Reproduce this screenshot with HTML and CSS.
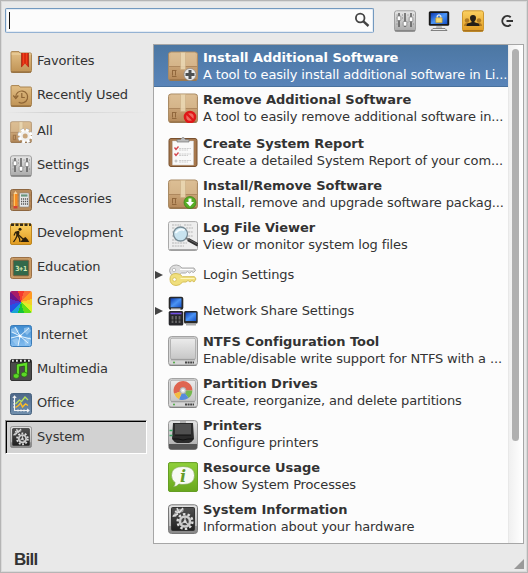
FILE: index.html
```html
<!DOCTYPE html>
<html lang="en">
<head>
<meta charset="utf-8">
<title>Menu</title>
<link rel="stylesheet" href="styles.css">
</head>
<body>
<svg class="defs" aria-hidden="true">
  <defs>
    <linearGradient id="tan" x2="0" y2="1"><stop stop-color="#e2bf86"/><stop offset="1" stop-color="#bf9254"/></linearGradient>
    <linearGradient id="card" x2="0" y2="1"><stop stop-color="#dcbd94"/><stop offset=".5" stop-color="#c9a376"/><stop offset="1" stop-color="#b48859"/></linearGradient>
    <linearGradient id="silver" x2="0" y2="1"><stop stop-color="#e6e6e6"/><stop offset="1" stop-color="#a8a8a8"/></linearGradient>
    <linearGradient id="pale" x2="0" y2="1"><stop stop-color="#ececec"/><stop offset="1" stop-color="#c6c6c6"/></linearGradient>
    <linearGradient id="dark" x2="0" y2="1"><stop stop-color="#505050"/><stop offset="1" stop-color="#202020"/></linearGradient>
    <linearGradient id="gold" x2="0" y2="1"><stop stop-color="#fbd060"/><stop offset="1" stop-color="#e09a20"/></linearGradient>
    <linearGradient id="blue" x2="1" y2="1"><stop stop-color="#0b39b0"/><stop offset=".5" stop-color="#4b94f4"/><stop offset="1" stop-color="#1450c8"/></linearGradient>
    <linearGradient id="sky" x2="0" y2="1"><stop stop-color="#3e8bd0"/><stop offset="1" stop-color="#84bdf0"/></linearGradient>
    <linearGradient id="green" x2="0" y2="1"><stop stop-color="#8fd03a"/><stop offset="1" stop-color="#68a61d"/></linearGradient>
    <linearGradient id="slate" x2="0" y2="1"><stop stop-color="#4d6788"/><stop offset="1" stop-color="#7190ae"/></linearGradient>
  </defs>
  <symbol id="sliders" viewBox="0 0 22 22">
    <rect x=".5" y=".8" width="21" height="20.7" rx="2.2" fill="url(#silver)" stroke="#a0a0a0"/>
    <path d="M1 20.8h20" stroke="#777" />
    <path d="M5 3v14M11 3v14M17 3v14" stroke="#555" stroke-width="1.4"/>
    <path d="M2.5 5h1M2.5 8h1M2.5 11h1M2.5 14h1M8 5h1M8 8h1M13.5 5h1M13.5 12h1M19 5h1M19 14h1" stroke="#888"/>
    <g fill="#fff" stroke="#777" stroke-width=".7"><rect x="3.2" y="6" width="3.6" height="4.5" rx=".7"/><rect x="9.2" y="11.5" width="3.6" height="4.5" rx=".7"/><rect x="15.2" y="7" width="3.6" height="4.5" rx=".7"/></g>
  </symbol>
  <symbol id="box" viewBox="0 0 30 30">
    <rect x=".5" y="1" width="29" height="28.5" rx="2.5" fill="url(#card)" stroke="#a98b65"/>
    <path d="M3 1.7h24L29 15.500H1z" fill="#dcbf96" opacity=".6"/>
    <path d="M1 15.5h28" stroke="#a67f55" stroke-width=".8"/>
    <path d="M1.500 29h27" stroke="#8a673f"/>
    <path d="M12.5 1.500h5v17h-5z" fill="#ead8b4" opacity=".85"/>
    <path d="M12.5 1.500v17h5v-17" fill="none" stroke="#c4a880" stroke-width=".5"/>
    <path d="M4.500 20v4.500M7.500 20v4.500M4 25.5h4.500M4 19.500h4.500" fill="none" stroke="#8c6238" stroke-width=".9"/>
  </symbol>
  <symbol id="gears" viewBox="0 0 30 30">
    <rect x=".5" y=".8" width="29" height="28.7" rx="3" fill="url(#silver)" stroke="#777"/>
    <path d="M1 22h28v5q0 2-2 2H3q-2 0-2-2z" fill="#777" opacity=".6"/>
    <rect x="3.5" y="3.5" width="23" height="23" rx="1" fill="url(#dark)" stroke="#333"/>
    <path d="M4 13l5-8h7l-1 3-5 1-2 4z" fill="#999"/>
    <circle cx="17" cy="17.500" r="7.4" fill="none" stroke="#ddd" stroke-width="2.4" stroke-dasharray="2.5 2.150"/>
    <circle cx="17" cy="17.500" r="5" fill="#444" stroke="#ccc" stroke-width="2.600"/>
    <path d="M7 7l3 2M9 4l2 5M15 4l-4 5M5 12l5-2" stroke="#ddd" stroke-width="1.5"/>
    <path d="M17 17.500l5 5M17 17.500l-5 3M17 17.500V12" stroke="#ccc" stroke-width="1.3"/>
    <circle cx="17" cy="17.500" r="1.5" fill="#ddd"/>
  </symbol>
  <symbol id="drive" viewBox="0 0 30 30">
    <rect x=".5" y=".6" width="29" height="28.9" rx="3" fill="#d6d6d6" stroke="#9d9d9d"/>
    <rect x="2.5" y="2.300" width="25" height="21" rx="1.5" fill="url(#pale)" stroke="#a8a8a8" stroke-width=".8"/>
    <path d="M3 23.8h24" stroke="#8a8a8a" stroke-width=".8"/><path d="M1.500 29.200h27" stroke="#777"/>
    <path d="M17 26.5h9" stroke="#444" stroke-width="2.2" stroke-dasharray="2 .6"/>
    <circle cx="6" cy="26.5" r="1" fill="#4ca843"/>
  </symbol>
</svg>

<div class="window">
  <header class="toolbar">
    <div class="search">
      <span class="caret"></span>
      <svg class="lens" viewBox="0 0 16 16"><circle cx="6.200" cy="6" r="4.300" fill="none" stroke="#444" stroke-width="1.800"/><path d="M9.200 9.200l5.300 4.800" stroke="#444" stroke-width="2.400"/></svg>
    </div>
    <div class="actions">
      <svg class="i22"><use href="#sliders"/></svg>
      <svg class="i22" viewBox="0 0 22 22">
        <rect x=".8" y="1.3" width="20.4" height="14.500" rx="1.5" fill="#181818"/><rect x="2.7" y="3" width="16.6" height="11" fill="url(#blue)"/>
        <path d="M8.500 16h5l.8 2.300H7.700z" fill="#bbb"/><path d="M3 20.500l2-2h12l2 2z" fill="#eee" stroke="#666" stroke-width=".8"/>
        <path d="M9.200 8V6.200q1.800-2.600 3.600 0V8" fill="none" stroke="#eee" stroke-width="1.200"/><rect x="7.800" y="7.800" width="6.400" height="4.900" rx=".5" fill="#f4d76c" stroke="#b68d24" stroke-width=".6"/>
      </svg>
      <svg class="i22" viewBox="0 0 22 22">
        <rect x=".5" y=".8" width="21" height="20.7" rx="2" fill="url(#gold)" stroke="#cd982f"/><path d="M1 20.8h20" stroke="#94631a"/>
        <g fill="#b07a22"><circle cx="5" cy="10.500" r="2.200"/><path d="M2 16q0-3 3-3h12q3 0 3 3z"/><circle cx="17" cy="10.500" r="2.200"/></g>
        <path d="M8 8q0-3 3-3t3 3q0 2.300-1.500 3.300v1l4 1.200q1 .7 1 2.500h-13q0-1.800 1-2.500l4-1.200v-1Q8 10.300 8 8z" fill="#252018"/>
      </svg>
      <svg class="quit" viewBox="0 0 16 16"><path d="M11.700 4.300A5 5 0 1 0 11.700 11.700" fill="none" stroke="#333" stroke-width="2"/><path d="M7.500 8H14" stroke="#333" stroke-width="2"/></svg>
    </div>
  </header>

  <main class="content">
    <nav class="categories">
      <div class="cat"><svg class="i22" viewBox="0 0 22 22"><path d="M1 3V1.500q0-.9 1-.9h7l1 1.400h10.500q1 0 1 1.500v16q0 2-2 2h-17q-1.500 0-1.500-2z" fill="url(#tan)" stroke="#a98450"/><path d="M1.500 3h19" stroke="#eed5a5"/><path d="M1 21h20" stroke="#896539"/><path d="M11.500 2h7v14.500L15 12.500l-3.500 4z" fill="#d92b10"/><path d="M13.500 2v11M16.500 2v11" stroke="#f5481f" stroke-width=".8"/><path d="M11.500 2v14M18.500 2v14" stroke="#972311" stroke-width=".7"/></svg><span>Favorites</span></div>
      <div class="cat"><svg class="i22" viewBox="0 0 22 22"><path d="M1 3V1.500q0-.9 1-.9h7l1 1.400h10.500q1 0 1 1.500v16q0 2-2 2h-17q-1.500 0-1.500-2z" fill="url(#tan)" stroke="#a98450"/><path d="M1 21h20" stroke="#896539"/><path d="M5.700 12a6 6 0 1 1 3 5.200M3.300 10.500l2.500 3 2.500-3M11.800 8v4.500h3" fill="none" stroke="#8e6535" stroke-width="1.200"/></svg><span>Recently Used</span></div>
      <hr>
      <div class="cat"><svg class="i22" viewBox="0 0 22 22"><use href="#box" width="22" height="22"/><circle cx="15.200" cy="15" r="6.200" fill="none" stroke="#aaa" stroke-width="3.400" stroke-dasharray="3 1.870"/><circle cx="15.200" cy="15" r="4.100" fill="#c9a67c" stroke="#f1f1f1" stroke-width="3.200"/><circle cx="15.200" cy="15" r="6" fill="none" stroke="#fff" stroke-width="2.600" stroke-dasharray="2.800 1.912"/></svg><span>All</span></div>
      <div class="cat"><svg class="i22"><use href="#sliders"/></svg><span>Settings</span></div>
      <div class="cat"><svg class="i22" viewBox="0 0 22 22"><rect x=".5" y=".5" width="21" height="21" rx="2" fill="#b68a5b" stroke="#8d6640"/><path d="M1 6h20M1 12h20M1 17h20" stroke="#9d7042" opacity=".6"/><path d="M3.500 5l2-3 2 3v14h-4z" fill="#f78b22"/><path d="M3.500 5l2-3 2 3" fill="#f2d4a6"/><path d="M4.500 5v12" stroke="#ffc462"/><path d="M3.500 17h4v2.500h-4z" fill="#d04438"/><rect x="9.500" y="4" width="9.500" height="14" rx="1" fill="#e8e8e8" stroke="#888" stroke-width=".6"/><path d="M11 6.500h6.500" stroke="#69957e" stroke-width="2.200"/><path d="M11 10h7M11 12.500h7M11 15h7" stroke="#555" stroke-width="1.300" stroke-dasharray="1.200 .8"/></svg><span>Accessories</span></div>
      <div class="cat"><svg class="i22" viewBox="0 0 22 22"><rect x=".5" y=".8" width="21" height="20.700" rx="1.500" fill="url(#gold)" stroke="#bd8620"/><path d="M1 1.800h20" stroke="#382d19" stroke-width="2.400" stroke-dasharray="3 1.500"/><circle cx="10" cy="6.300" r="1.500" fill="#2d210c"/><path d="M9 8.300L5.500 9.300 4 12.500" fill="none" stroke="#2d210c" stroke-width="1.200"/><path d="M8.300 8.500L7.300 13" stroke="#2d210c" stroke-width="2.600"/><path d="M7 13l-1.500 3L3.500 19M8 13l1.500 2.500.5 3.500M6 9.500l7 6.500" fill="none" stroke="#2d210c" stroke-width="1.300"/><path d="M10.500 19l2.500-3.500 2.500-1.500 2 2.300 1.800 2.700z" fill="#2d210c"/></svg><span>Development</span></div>
      <div class="cat"><svg class="i22" viewBox="0 0 22 22"><rect x=".5" y=".5" width="21" height="21" rx="2" fill="#c99b66" stroke="#9b7046"/><rect x="3.300" y="3.300" width="15.400" height="15.400" rx="1" fill="#32694a" stroke="#785f3c"/><text class="chalk" x="11" y="13.500" text-anchor="middle">3+1</text></svg><span>Education</span></div>
      <div class="cat"><span class="i22 wheel"></span><span>Graphics</span></div>
      <div class="cat"><svg class="i22" viewBox="0 0 22 22"><rect x=".5" y=".5" width="21" height="21" rx="2" fill="url(#sky)" stroke="#397bb8"/><path d="M1 4l5-2 3 4-3 3-5-1zM14 3l5-1 2 4-4 4-3-3zM2 15l5-2 3 4-4 3zM14 14l6-2-1 7-4 1z" fill="#a5d0f3" opacity=".65"/><path d="M2 7l8 4 9-8M10 11L8 21M10 11l8 7M1 13l8-2 12 3M5 2l5 9" fill="none" stroke="#e4f4ff" stroke-width="1"/><circle cx="10" cy="11" r="1.600" fill="#fff"/></svg><span>Internet</span></div>
      <div class="cat"><svg class="i22" viewBox="0 0 22 22"><rect x=".5" y=".8" width="21" height="20.700" rx="1.500" fill="#4b4b4b" stroke="#333"/><path d="M1 2h20" stroke="#1d1d1d" stroke-width="3"/><path d="M2 1.800h19" stroke="#eee" stroke-width="2" stroke-dasharray="1.800 2.200"/><path d="M8 16.500V6.500l8-1.500v10" fill="none" stroke="#1d4f0d" stroke-width="3.400"/><path d="M8 16.500V6.500l8-1.500v10" fill="none" stroke="#5fdc28" stroke-width="2.400"/><g fill="#5bd827" stroke="#1d4f0d" stroke-width=".5"><ellipse cx="6.200" cy="17" rx="3" ry="2.400"/><ellipse cx="14.200" cy="15.500" rx="3" ry="2.400"/></g></svg><span>Multimedia</span></div>
      <div class="cat"><svg class="i22" viewBox="0 0 22 22"><rect x=".5" y=".5" width="21" height="21" rx="2" fill="url(#slate)" stroke="#48637f"/><path d="M4.500 3v14.500H19M2.800 5l1.700-2 1.700 2M17 15.800l2 1.700-2 1.700M3 8h2M3 11h2M3 14h2M8 16.500v2M11 16.500v2M14 16.500v2" fill="none" stroke="#f3f3f3" stroke-width="1.100"/><path d="M5.500 11l4-4 2 1.500L15 4l3 3" fill="none" stroke="#b9e25c" stroke-width="1.300"/><path d="M5.500 14.500l3-2 2-2.500 2 4 3-3 2.500 1.500" fill="none" stroke="#ffbd22" stroke-width="1.400"/></svg><span>Office</span></div>
      <div class="cat active"><svg class="i22"><use href="#gears"/></svg><span>System</span></div>
    </nav>

    <section class="panel">
      <div class="apps">
        <div class="app selected"><svg class="i30" viewBox="0 0 30 30"><use href="#box"/><circle cx="22" cy="23.500" r="6" fill="#ededed" stroke="#888" stroke-width=".7"/><path d="M22 19v9M17.500 23.500h9" stroke="#4d5051" stroke-width="3"/></svg><div class="label"><b>Install Additional Software</b><span>A tool to easily install additional software in Li...</span></div></div>
        <div class="app gap"><svg class="i30" viewBox="0 0 30 30"><use href="#box"/><circle cx="22" cy="24" r="5" fill="#ef6b5f" stroke="#df1818" stroke-width="2.600"/><path d="M18.500 20.500l7 7" stroke="#df1818" stroke-width="2.300"/></svg><div class="label"><b>Remove Additional Software</b><span>A tool to easily remove additional software in...</span></div></div>
        <div class="app"><svg class="i30" viewBox="0 0 30 30"><rect x="1" y="1.500" width="28" height="28" rx="2" fill="#a7784d" stroke="#79512f"/><path d="M4.500 4h21v24h-21z" fill="#f9f9f9" stroke="#ccc" stroke-width=".5"/><path d="M9 5V2.500h3.500Q15-1.500 17.500 2.500H21V5z" fill="#bbb" stroke="#777" stroke-width=".7"/><path d="M11 11.500h12M11 13h9M11 17h12M11 18.500h9M11 23.500h12M11 25h9" stroke="#c4c4c4" stroke-width=".8" stroke-dasharray="2 .6"/><path d="M6.500 10.500l1.500 2 2.500-3M6.500 16.500l1.500 2 2.500-3" fill="none" stroke="#d4424b" stroke-width="1.300"/><circle cx="8" cy="24" r="1" fill="none" stroke="#999" stroke-width=".6"/></svg><div class="label"><b>Create System Report</b><span>Create a detailed System Report of your com...</span></div></div>
        <div class="app"><svg class="i30" viewBox="0 0 30 30"><use href="#box"/><circle cx="22" cy="23.500" r="6" fill="#57ad24" stroke="#397e15" stroke-width=".7"/><path d="M20.500 19.500h3V23h2.500l-4 4.500-4-4.500h2.500z" fill="#fff"/></svg><div class="label"><b>Install/Remove Software</b><span>Install, remove and upgrade software packag...</span></div></div>
        <div class="app"><svg class="i30" viewBox="0 0 30 30"><rect x=".5" y=".6" width="29" height="28.900" rx="2" fill="#eee" stroke="#aaa"/><path d="M1.500 28.800h27" stroke="#888"/><path d="M4 4h9M16 4h8M4 7h3M18 7h7M4 11h2M20 11h5M4 15h2M20 15h5M4 19h9M4 22h15M4 25h12" stroke="#b5b5b5" stroke-width="1" stroke-dasharray="2 .7"/><circle cx="12.500" cy="13" r="7" fill="#c8e3ef" stroke="#778b95" stroke-width="1.300"/><path d="M7.500 12q4-5 9-3" fill="none" stroke="#f4fcff" stroke-width="2"/><path d="M18 17l3 2" stroke="#777" stroke-width="2"/><path d="M20 18.500l10 5.500" stroke="#303030" stroke-width="3.400"/><path d="M20 18l10 5.500" stroke="#777" stroke-width=".7"/></svg><div class="label"><b>Log File Viewer</b><span>View or monitor system log files</span></div></div>
        <div class="app single"><i class="arrow"></i><svg class="i30" viewBox="0 0 30 30"><path d="M1.500 10.500q1-5.500 7-5.500 3 0 5.500 3h12l1.500 2.500-2 2-2-1-2 1.500-2-1.500-2 1.500h-4q-2 3-6 3-5 0-6-5.500z" fill="#dedede" stroke="#aaa"/><path d="M12 9.500h13" stroke="#fff"/><circle cx="6" cy="10" r="1.700" fill="#fff" stroke="#aaa" stroke-width=".7"/><path d="M2 19q0-5.500 6-5.500 4.500 0 6.500 3.200h12l1.500 2.300-2 3-2-1.500-2 1.500-2-1.500-2 1.500h-3.500Q12.500 25.500 8 25.500 2 25 2 19z" fill="#f0df7c" stroke="#d6c05c"/><path d="M12.500 18.500h14" stroke="#fff6bb"/><circle cx="6.500" cy="19.500" r="1.800" fill="#fff" stroke="#cdb448" stroke-width=".7"/></svg><div class="label">Login Settings</div></div>
        <div class="app single tall"><i class="arrow"></i><svg class="i30" viewBox="0 0 30 30"><rect x=".7" y=".8" width="14.600" height="13" rx="2" fill="#292929"/><rect x="2.500" y="2.300" width="11" height="9" fill="url(#blue)"/><path d="M3 13.200h9.500" stroke="#ddd" stroke-width="1.500"/><rect x=".7" y="15" width="14.600" height="14.500" rx="1.500" fill="#27272b"/><path d="M2.500 17.500h11" stroke="#7350e5" stroke-width="1.600"/><path d="M4.500 20v7M8 20v7M11.500 20v7" stroke="#666" stroke-width="1.800"/><path d="M1 24h14" stroke="#222"/><rect x="16" y="15" width="13.700" height="12.500" rx="1.500" fill="#292929"/><rect x="17.500" y="16.500" width="10.700" height="8.500" fill="url(#blue)"/><path d="M18 28.500h10" stroke="#aaa" stroke-width="2"/></svg><div class="label">Network Share Settings</div></div>
        <div class="app raised"><svg class="i30"><use href="#drive"/></svg><div class="label"><b>NTFS Configuration Tool</b><span>Enable/disable write support for NTFS with a ...</span></div></div>
        <div class="app raised"><svg class="i30" viewBox="0 0 30 30"><use href="#drive"/><path d="M15 12.500L6.200 15.800A9.400 9.400 0 1 1 24.400 12.500z" fill="#df6550"/><path d="M15 12.500h9.400Q24 18 20.500 20z" fill="#74b850"/><path d="M15 12.500l5.500 7.500q-5 3.500-9.500 1.200z" fill="#568bdc"/><path d="M15 12.500l-4 8.700Q7.500 19.500 6.200 15.800z" fill="#f4bd42"/><circle cx="15" cy="12.500" r="3" fill="#ddd" stroke="#aaa"/><circle cx="15" cy="12.500" r="1" fill="#fff"/></svg><div class="label"><b>Partition Drives</b><span>Create, reorganize, and delete partitions</span></div></div>
        <div class="app raised"><svg class="i30" viewBox="0 0 30 30"><rect x=".5" y=".6" width="29" height="28.900" rx="3" fill="url(#silver)" stroke="#999"/><path d="M1 24h28v3.500q0 2-2 2H3q-2 0-2-2z" fill="#555"/><path d="M5 3h20l1 16q-2 3-5 4H9q-3-1-5-4z" fill="#2b2b2b"/><path d="M7 4h16v11H7z" fill="#505050"/><path d="M7 15h16M5 19h5q5 2 10 0h5" stroke="#111" fill="none"/><path d="M12 2h6" stroke="#888"/><path d="M1.500 10.500h3M1.500 15.500h3" stroke="#39aa65" stroke-width="1.500"/></svg><div class="label"><b>Printers</b><span>Configure printers</span></div></div>
        <div class="app raised"><svg class="i30" viewBox="0 0 30 30"><rect x=".5" y=".6" width="29" height="28.900" rx="1.500" fill="url(#green)" stroke="#659e24"/><path d="M15 4.500q11.500 0 11.500 9t-11.500 9q-2 0-4-.5-2 2.500-6 3 2.500-2 2-4.500-3.500-2.500-3.500-7 0-9 11.500-9z" fill="#f8faf5" stroke="#729e40" stroke-width=".6"/><text class="info" x="15" y="19.500" text-anchor="middle">i</text></svg><div class="label"><b>Resource Usage</b><span>Show System Processes</span></div></div>
        <div class="app raised"><svg class="i30"><use href="#gears"/></svg><div class="label"><b>System Information</b><span>Information about your hardware</span></div></div>
      </div>
      <div class="track"><div class="thumb"></div></div>
    </section>
  </main>
  <footer class="footer"><span class="user">Bill</span><i class="grip"></i></footer>
</div>
</body>
</html>
```
FILE: styles.css
```css
* { box-sizing: border-box; }
body { margin: 0; font: 13px/17px "DejaVu Sans", sans-serif; color: #333; }
.defs { position: absolute; width: 0; height: 0; }
svg { flex: none; display: block; }
.window { width: 528px; height: 573px; background: #e9e9e9; border: 1px solid #b5b5b5; box-shadow: inset 0 0 0 1px #dadada; padding: 7px 3px 0 4px; display: flex; flex-direction: column; overflow: hidden; }
.toolbar { height: 25px; display: flex; flex: none; }
.search { width: 369px; height: 25px; border: 1px solid #7399bf; border-bottom-color: #94b2d3; border-radius: 2px; background: #fcfcfc; box-shadow: inset 0 0 0 1px #e5ecf4; display: flex; justify-content: space-between; padding: 3px 3px 0; }
.caret { width: 1px; height: 17px; background: #111; }
.lens { width: 16px; height: 16px; }
.actions { display: flex; padding: 2px 0 0 20px; gap: 12px; }
.i22 { width: 22px; height: 22px; flex: none; }
.i30 { width: 30px; height: 30px; flex: none; }
.quit { width: 16px; height: 16px; margin: 3px 0 0 3px; }
.content { display: flex; margin-top: 11px; height: 500px; flex: none; }
.categories { width: 142px; margin-right: 6px; }
.cat { height: 34px; display: flex; align-items: center; gap: 5px; padding: 1px 0 0 5px; letter-spacing: -0.15px; }
.cat span:last-child { position: relative; top: -1px; }
.cat.active { background: #d2d2d2; border: 1px solid; border-color: #8d8d8d #fff #fff #8d8d8d; box-shadow: inset 1px 1px #000; padding: 0 0 0 4px; }
.categories hr { height: 2px; margin: 0; border: 0; background: linear-gradient(90deg, transparent, #d2d2d2 30%, #d8d8d8 60%, transparent) top / 100% 1px no-repeat; }
.wheel { border-radius: 2px; background: conic-gradient(from -15deg at 50% 50%, #f53b2e 0 30deg, #fa6b37 0 60deg, #ff9a22 0 90deg, #f6cf28 0 120deg, #daf026 0 150deg, #62df15 0 180deg, #16c33b 0 210deg, #1aa5d3 0 240deg, #2650e5 0 270deg, #5433c7 0 300deg, #6c1388 0 330deg, #a71b68 0 360deg); }
.chalk { font: bold 7px "DejaVu Sans Mono", monospace; fill: #d9ecbb; letter-spacing: -.3px; }
.info { font: italic bold 16px "DejaVu Serif", serif; fill: #669b27; }
.panel { width: 371px; border: 1px solid #a6a6a6; background: #fcfcfc; display: flex; }
.apps { width: 354px; flex: none; }
.app { height: 42px; padding: 6px 0 0 14px; display: flex; gap: 5px; }
.app.gap { height: 44px; }
.label { height: 34px; margin-top: -2px; white-space: nowrap; letter-spacing: -0.14px; }
.label b, .label span { display: block; }
.label b { letter-spacing: -.03px; }
.raised .label { margin-top: -3px; }
.selected { color: #fff; background: linear-gradient(#4c77a3, #5984b9); box-shadow: inset 0 -1px #49719d; }
.single { height: 36px; padding: 3px 0 0 1px; gap: 0; }
.single .label { margin: 6px 0 0 5px; letter-spacing: -0.1px; }
.single.tall { height: 37px; }
.arrow { width: 8px; height: 8px; margin: 11px 5px 0 0; background: #444; clip-path: polygon(0 0, 100% 50%, 0 100%); }
.track { flex: 1; border-left: 1px solid #e8e8e8; background: linear-gradient(90deg, #f0f0f0, #fff); padding: 4px 0 0 3px; }
.thumb { width: 7px; height: 392px; border-radius: 4px; background: #b0b0b0; }
.footer { flex: 1; display: flex; justify-content: space-between; padding-left: 9px; }
.user { font: bold 17px/20px "Liberation Sans", sans-serif; letter-spacing: -.7px; margin-top: 6px; }
.grip { width: 10px; height: 10px; margin-top: 15px; background: #999; clip-path: polygon(100% 0, 100% 100%, 0 100%); }
```
